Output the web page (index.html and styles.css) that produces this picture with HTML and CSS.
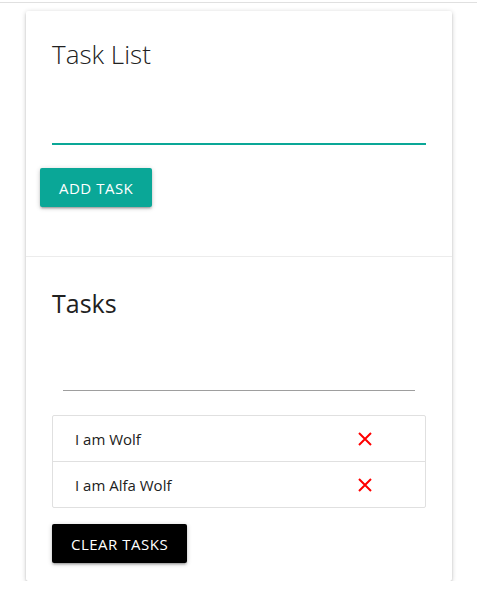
FILE: index.html
```html
<!DOCTYPE html>
<html lang="en">
<head>
<meta charset="utf-8">
<title>Task List</title>
<link rel="stylesheet" href="styles.css">
</head>
<body>
<div class="topbar"></div>
<main class="card">
  <section class="card-content">
    <h1 class="card-title">Task List</h1>
    <form class="task-form">
      <input class="task-input" type="text" aria-label="New task">
      <button class="btn btn-add" type="submit">Add Task</button>
    </form>
  </section>
  <section class="card-action">
    <h2 class="tasks-title">Tasks</h2>
    <input class="filter-input" type="text" aria-label="Filter tasks">
    <ul class="collection">
      <li class="collection-item">
        <span class="item-text">I am Wolf</span>
        <a class="delete-item" href="#" aria-label="Delete">
          <svg viewBox="0 0 14 14" width="14" height="14"><path d="M1 1L13 13M13 1L1 13" stroke="#ff0000" stroke-width="2" fill="none"/></svg>
        </a>
      </li>
      <li class="collection-item">
        <span class="item-text">I am Alfa Wolf</span>
        <a class="delete-item" href="#" aria-label="Delete">
          <svg viewBox="0 0 14 14" width="14" height="14"><path d="M1 1L13 13M13 1L1 13" stroke="#ff0000" stroke-width="2" fill="none"/></svg>
        </a>
      </li>
    </ul>
    <button class="btn btn-clear" type="button">Clear Tasks</button>
  </section>
</main>
</body>
</html>
```
FILE: styles.css
```css
* { box-sizing: border-box; }

body {
  margin: 0;
  background: #fff;
  font-family: "Open Sans", "Noto Sans", sans-serif;
  color: rgba(0, 0, 0, 0.87);
}

.topbar {
  height: 3px;
  border-bottom: 1px solid #e0e0e0;
}

.card {
  margin: 8px 0 0 26px;
  width: 426px;
  background: #fff;
  border-radius: 2px;
  box-shadow: 0 2px 2px 0 rgba(0,0,0,.14), 0 3px 1px -2px rgba(0,0,0,.12), 0 1px 5px 0 rgba(0,0,0,.2);
}

.card-content {
  padding: 26px 26px 49px;
}

.card-title {
  margin: 0;
  font-size: 26px;
  line-height: 34px;
  font-weight: 300;
  color: #212121;
}

.task-form {
  display: flex;
  flex-direction: column;
  align-items: flex-start;
}

.task-input {
  display: block;
  width: 100%;
  height: 46px;
  margin-top: 28px;
  padding: 0;
  border: none;
  border-bottom: 2px solid #0aa797;
  outline: none;
  font: inherit;
  background: transparent;
}

.btn {
  height: 39px;
  padding: 0 19px;
  border: none;
  border-radius: 2px;
  font-family: inherit;
  font-size: 15px;
  font-weight: 500;
  letter-spacing: .5px;
  text-transform: uppercase;
  color: #fff;
  cursor: pointer;
  box-shadow: 0 2px 2px 0 rgba(0,0,0,.14), 0 3px 1px -2px rgba(0,0,0,.12), 0 1px 5px 0 rgba(0,0,0,.2);
}

.btn-add {
  margin: 23px 0 0 -12px;
  background: #0aa797;
}

.card-action {
  border-top: 1px solid rgba(160,160,160,.2);
  padding: 29px 26px 18px;
}

.tasks-title {
  margin: 0;
  font-size: 25px;
  line-height: 34px;
  font-weight: 400;
  color: #212121;
}

.filter-input {
  display: block;
  width: calc(100% - 22px);
  height: 46px;
  margin: 25px 11px 0;
  padding: 0;
  border: none;
  border-bottom: 1px solid #9e9e9e;
  outline: none;
  font: inherit;
  background: transparent;
}

.collection {
  list-style: none;
  margin: 24px 0 0;
  padding: 0;
  border: 1px solid #e0e0e0;
  border-radius: 2px;
}

.collection-item {
  display: flex;
  align-items: center;
  height: 46px;
  padding: 0 53px 0 22px;
  border-bottom: 1px solid #e0e0e0;
  font-size: 15px;
  color: #212121;
}

.collection-item:last-child {
  height: 45px;
  border-bottom: none;
}

.delete-item {
  margin-left: auto;
  display: flex;
}

.btn-clear {
  margin-top: 16px;
  background: #000;
}
```
